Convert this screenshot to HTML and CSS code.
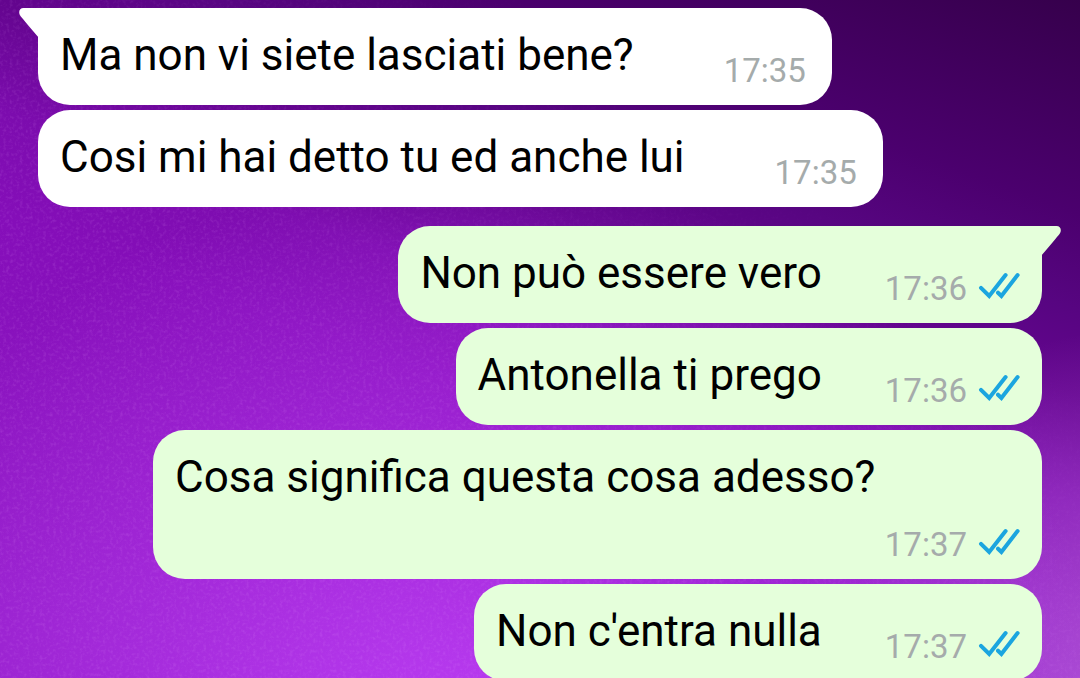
FILE: index.html
```
<!DOCTYPE html>
<html lang="it">

<head>
    <meta charset="UTF-8">
    <meta name="viewport" content="width=device-width, initial-scale=1.0">
    <title>Chat</title>
    <link rel="stylesheet" href="styles.css">
</head>

<body>
    <!-- shared shapes -->
    <svg class="defs" width="0" height="0" aria-hidden="true">
        <symbol id="ticks" viewBox="0 0 42 28">
            <path d="M3 15.8L11.2 24L27.6 3M20 20.7L23.4 24L39.6 3" fill="none" stroke="#1ba5df" stroke-width="4" stroke-linecap="round" />
        </symbol>
        <symbol id="tail" viewBox="0 0 20 31">
            <path d="M20 0H4.5C0.5 0 -1 4 1.2 7.5Q2 9 20 30Z" fill="currentColor" />
        </symbol>
        <filter id="grain">
            <feTurbulence type="fractalNoise" baseFrequency="0.3" numOctaves="2" seed="4" />
            <feColorMatrix values="0 0 0 0 0.85  0 0 0 0 0.4  0 0 0 0 1  1.6 0 0 0 -0.75" />
        </filter>
    </svg>

    <main class="chat">
        <svg class="wallpaper" aria-hidden="true">
            <rect width="100%" height="100%" filter="url(#grain)" />
        </svg>

        <ol class="messages">
            <li class="bubble in first">
                <svg class="tail" aria-hidden="true"><use href="#tail" /></svg>
                <p>Ma non vi siete lasciati bene?</p>
                <div class="meta"><time>17:35</time></div>
            </li>
            <li class="bubble in">
                <p>Cosi mi hai detto tu ed anche lui</p>
                <div class="meta"><time>17:35</time></div>
            </li>
            <li class="bubble out first">
                <svg class="tail" aria-hidden="true"><use href="#tail" /></svg>
                <p>Non può essere vero</p>
                <div class="meta"><time>17:36</time><svg class="ticks" role="img" aria-label="Letto"><use href="#ticks" /></svg></div>
            </li>
            <li class="bubble out">
                <p>Antonella ti prego</p>
                <div class="meta"><time>17:36</time><svg class="ticks" role="img" aria-label="Letto"><use href="#ticks" /></svg></div>
            </li>
            <li class="bubble out long">
                <p>Cosa significa questa cosa adesso?</p>
                <div class="meta"><time>17:37</time><svg class="ticks" role="img" aria-label="Letto"><use href="#ticks" /></svg></div>
            </li>
            <li class="bubble out">
                <p>Non c'entra nulla</p>
                <div class="meta"><time>17:37</time><svg class="ticks" role="img" aria-label="Letto"><use href="#ticks" /></svg></div>
            </li>
        </ol>
    </main>
</body>

</html>
```
FILE: styles.css
```
* {
    box-sizing: border-box;
}

body {
    margin: 0;
    font-family: Roboto, sans-serif;
    color: #000;
}

.defs {
    position: absolute;
}

.chat {
    position: relative;
    height: 100vh;
    overflow: hidden;
    background:
        radial-gradient(ellipse 60% 85% at 43% 110%, rgba(198, 70, 255, 0.8), rgba(180, 50, 240, 0) 100%),
        radial-gradient(ellipse 40% 60% at 108% 108%, rgba(190, 110, 225, 0.8), rgba(150, 60, 200, 0) 100%),
        linear-gradient(200deg, #36004c 0%, #4b006e 20%, #570581 29%, #64058f 37%, #7c0cae 47%, #850eb9 57%, #911bc6 93%);
}

.wallpaper {
    position: absolute;
    inset: 0;
    width: 100%;
    height: 100%;
    opacity: 0.2;
    mask-image: linear-gradient(215deg, transparent 25%, #000 60%);
}

.messages {
    position: relative;
    display: flex;
    flex-direction: column;
    gap: 5px;
    margin: 0;
    padding: 8px 38px 0;
    list-style: none;
}

.bubble {
    position: relative;
    display: flex;
    align-items: flex-end;
    padding: 21px 22px 15px;
    border-radius: 32px;
}

.bubble p {
    margin: 0;
    padding-bottom: 9px;
    font-size: 44px;
    line-height: 52px;
}

.in {
    align-self: flex-start;
    gap: 90px;
    padding-right: 26px;
    background: #fff;
}

.out {
    align-self: flex-end;
    gap: 63px;
    background: #e5ffdb;
}

.in.first {
    border-top-left-radius: 0;
}

.out.first {
    margin-top: 14px;
    border-top-right-radius: 0;
}

.long {
    flex-direction: column;
    gap: 0;
    width: 889px;
    max-width: 100%;
}

.long p {
    align-self: flex-start;
    padding-bottom: 23px;
}

.meta {
    display: flex;
    align-items: center;
    gap: 11px;
    font-size: 33px;
    line-height: 38px;
    color: #a5abab;
}

.ticks {
    width: 42px;
    height: 28px;
    margin-bottom: 6px;
}

.tail {
    position: absolute;
    top: 0;
    width: 20px;
    height: 31px;
}

.in .tail {
    left: -19px;
    color: #fff;
}

.out .tail {
    right: -19px;
    color: #e5ffdb;
    transform: scaleX(-1);
}
```
